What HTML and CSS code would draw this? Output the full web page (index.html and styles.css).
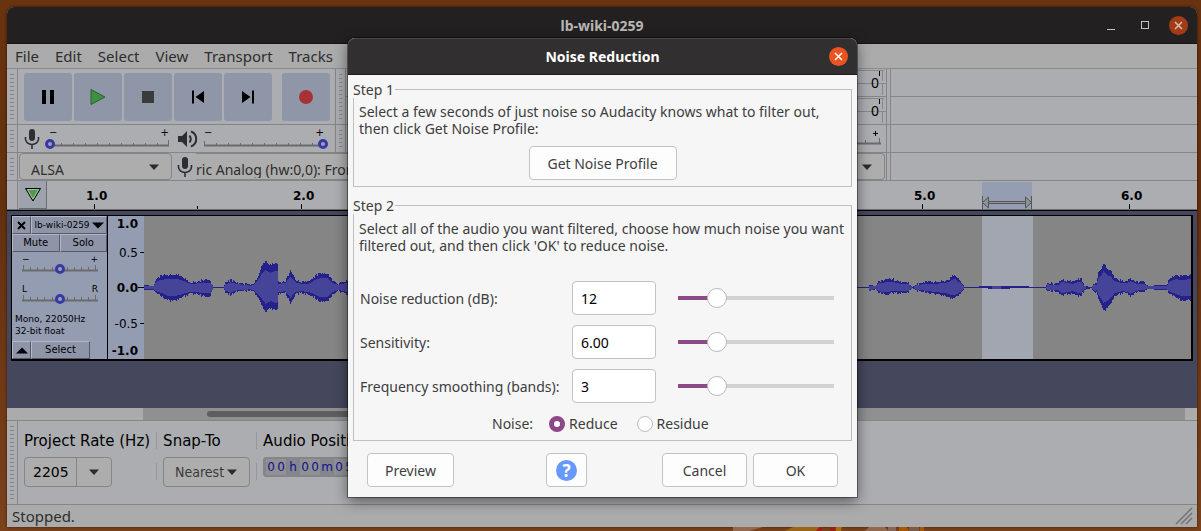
FILE: index.html
```html
<!DOCTYPE html>
<html lang="en">
<head>
<meta charset="utf-8">
<title>Noise Reduction</title>
<link rel="stylesheet" href="styles.css">
</head>
<body>
<svg class="defs" width="0" height="0" aria-hidden="true">
  <symbol id="mic" viewBox="0 0 16 20"><rect x="5" y="0" width="6" height="12" rx="3" fill="#2c2e2f"/><path d="M1.500 8v2a6.500 5.500 0 0 0 13 0V8M8 15v5" fill="none" stroke="#2c2e2f" stroke-width="1.600"/></symbol>
  <symbol id="ticks" viewBox="0 0 120 8"><path d="M0 6.500H120" stroke="#6b6b6b" stroke-width="2"/><path d="M.5 2v4M12.500 4v2M24.500 4v2M36.500 4v2M48.500 4v2M60.500 4v2M72.500 4v2M84.500 4v2M96.500 4v2M108.500 4v2M119.500 1v5" stroke="#6b6b6b"/></symbol>
  <symbol id="ticks-short" viewBox="0 0 76 8"><path d="M0 6.500H76" stroke="#6b6b6b" stroke-width="2"/><path d="M1.500 1v5M8.500 3v3M15.500 3v3M22.500 3v3M30.500 3v3M45.500 3v3M52.500 3v3M59.500 3v3M66.500 3v3M73.500 1v5" stroke="#6b6b6b"/></symbol>
  <symbol id="caret" viewBox="0 0 10 6"><path d="M0 .5h10L5 6z" fill="#2b2b2b"/></symbol>
</svg>

<main class="app">
  <header class="titlebar">
    <h1>lb-wiki-0259</h1>
    <div class="window-buttons">
      <button aria-label="Minimize"><svg width="10" height="10"><path d="M1 9.500h8" stroke="#c4c1be"/></svg></button>
      <button aria-label="Maximize"><svg width="10" height="10"><rect x="1.500" y="1.500" width="7" height="7" fill="none" stroke="#c4c1be"/></svg></button>
      <button class="close dim" aria-label="Close"><svg width="9" height="9"><path d="M1 1l7 7M8 1l-7 7" stroke="#d8c0b6" stroke-width="1.500"/></svg></button>
    </div>
  </header>
  <nav class="menu">
    <button>File</button><button>Edit</button><button>Select</button><button>View</button><button>Transport</button><button>Tracks</button>
  </nav>

  <section class="toolbars">
    <div class="tool-row tall">
      <div class="grip"></div>
      <div class="transport">
        <button aria-label="Pause"><svg width="14" height="16"><path d="M1 1h4v14H1zM9 1h4v14H9z"/></svg></button>
        <button aria-label="Play"><svg width="18" height="18"><path d="M2 1.500v15L16 9z" fill="#3f9141" stroke="#2b5f2e"/></svg></button>
        <button aria-label="Stop"><svg width="14" height="14"><path d="M1 1h12v12H1z" fill="#3a3c3b"/></svg></button>
        <button aria-label="Skip to start"><svg width="14" height="14"><path d="M1 .5h2v13H1zM13 1v12L4.500 7z"/></svg></button>
        <button aria-label="Skip to end"><svg width="14" height="14"><path d="M11 .5h2v13h-2zM1 1v12l8.500-6z"/></svg></button>
        <button class="record" aria-label="Record"><svg width="16" height="16"><circle cx="8" cy="8" r="7" fill="#a73233"/></svg></button>
      </div>
      <div class="grip second"></div>
      <div class="meters">
        <div class="meter"><svg width="30" height="27"><path d="M0 1.500h27M0 14.500h18M22 14.500h7M25.500 1v11M25.500 14v12" stroke="#878787" fill="none"/><path d="M22.500 2v5" stroke="#000"/><text x="14" y="19">0</text></svg></div>
        <div class="meter"><svg width="30" height="27"><path d="M0 1.500h27M0 14.500h18M22 14.500h7M25.500 1v11M25.500 14v12" stroke="#878787" fill="none"/><path d="M22.500 2v5" stroke="#000"/><text x="14" y="19">0</text></svg></div>
      </div>
      <div class="spare"><div></div><div></div></div>
    </div>
    <div class="tool-row">
      <div class="grip"></div>
      <div class="mixer">
        <svg width="16" height="20"><use href="#mic"/></svg>
        <div class="slider">
          <div class="ends"><span>−</span><span>+</span></div>
          <div class="rail"><svg width="120" height="8"><use href="#ticks"/></svg><input type="range" aria-label="Recording volume" min="0" max="100" value="0"></div>
        </div>
        <svg class="speaker" width="20" height="18"><path d="M0 6h4l5-5v16l-5-5H0z" fill="#2c2e2f"/><path d="M11.500 5.500q2.500 3.500 0 7M13 1.500a8 8 0 0 1 0 15" fill="none" stroke="#2c2e2f" stroke-width="2"/></svg>
        <div class="slider">
          <div class="ends"><span>−</span><span>+</span></div>
          <div class="rail"><svg width="120" height="8"><use href="#ticks"/></svg><input type="range" aria-label="Playback volume" min="0" max="100" value="100"></div>
        </div>
      </div>
      <div class="grip second"></div>
      <div class="meters"><div class="meter last"><svg width="34" height="26"><path d="M0 18.500h28" stroke="#6b6b6b" stroke-width="2"/><path d="M12.500 15v3M26.500 13v5" stroke="#6b6b6b"/><path d="M20 8.500h5M22.500 6v5" stroke="#000"/></svg></div></div>
      <div class="spare"></div>
    </div>
    <div class="tool-row">
      <div class="grip"></div>
      <div class="devices">
        <div class="select host"><select aria-label="Audio host"><option>ALSA</option></select><svg width="10" height="6"><use href="#caret"/></svg></div>
        <svg width="16" height="20"><use href="#mic"/></svg>
        <div class="select device"><select aria-label="Recording device"><option>ric Analog (hw:0,0): Front</option></select><svg width="10" height="6"><use href="#caret"/></svg></div>
      </div>
      <div class="spare"></div>
    </div>
  </section>

  <section class="timeline">
    <div class="timeline-grip"></div>
    <button class="pin" aria-label="Pinned play head"><svg width="18" height="16"><path d="M1.500 1.500h15L9 14z" fill="#4f9a50" stroke="#000"/><path d="M3.500 2.500h11L9 12z" fill="none" stroke="#a5bfa2"/></svg></button>
    <svg class="ruler" height="28">
      <rect x="935" y="1" width="50" height="27" fill="#949db1"/>
      <path d="M47.500 23v5M150.500 25v3M254.500 23v5M875.500 23v5M1082.500 23v5" stroke="#000"/>
      <path d="M941 20.500h38M941 22.500h38M935.500 15v13M984.500 15v13" stroke="#55575b"/>
      <path d="M941 21.500h38" stroke="#909090"/>
      <path d="M941.500 16v11L935.500 21.500zM978.500 16v11l6-5.500z" fill="#909090" stroke="#55575b"/>
      <g class="seconds"><text x="39" y="19">1.0</text><text x="246" y="19">2.0</text><text x="867" y="19">5.0</text><text x="1074" y="19">6.0</text></g>
    </svg>
  </section>

  <section class="tracks">
    <article class="track">
      <div class="panel">
        <div class="pair title"><button class="square" aria-label="Close track"><svg width="9" height="9"><path d="M1 1l7 7M8 1l-7 7" stroke="#000" stroke-width="2"/></svg></button><button class="name">lb-wiki-0259 <svg width="12" height="7"><path d="M0 .5h12L6 6.500z"/></svg></button></div>
        <div class="pair"><button>Mute</button><button>Solo</button></div>
        <div class="slider small">
          <div class="ends"><span>−</span><span>+</span></div>
          <div class="rail"><svg width="76" height="8"><use href="#ticks-short"/></svg><input type="range" aria-label="Gain" value="50"></div>
        </div>
        <div class="slider small pan">
          <div class="ends"><span>L</span><span>R</span></div>
          <div class="rail"><svg width="76" height="8"><use href="#ticks-short"/></svg><input type="range" aria-label="Pan" value="50"></div>
        </div>
        <p>Mono, 22050Hz<br>32-bit float</p>
        <div class="pair foot"><button class="square" aria-label="Collapse"><svg width="12" height="7"><path d="M0 6.500h12L6 .5z"/></svg></button><button class="pick">Select</button></div>
      </div>
      <svg class="scale" width="37" height="143">
        <path d="M32 36.500h4M30 71.500h6M32 107.500h4" stroke="#000"/>
        <g text-anchor="end"><text class="strong" x="30" y="12">1.0</text><text x="30" y="41">0.5</text><text class="strong" x="30" y="76">0.0</text><text x="30" y="112">-0.5</text><text class="strong" x="30" y="139">-1.0</text></g>
      </svg>
      <svg class="wave" viewBox="0 0 1047 143" preserveAspectRatio="none">
        <rect x="838" width="51" height="143" fill="#a2a6b0"/>
        <path id="peaks" fill="#24228a"/>
        <path id="rms" fill="#454499"/>
      </svg>
    </article>
  </section>
  <div class="scroll"><div class="scroll-rail"><div class="scroll-thumb"></div></div></div>

  <section class="selection">
    <div class="grip"></div>
    <div class="field"><label for="rate">Project Rate (Hz)</label>
      <div class="combo"><input id="rate" value="22050"><button aria-label="Choose rate"><svg width="10" height="6"><use href="#caret"/></svg></button></div></div>
    <div class="rule"></div>
    <div class="field"><label for="snap">Snap-To</label>
      <div class="select snap"><select id="snap"><option>Nearest</option></select><svg width="10" height="6"><use href="#caret"/></svg></div></div>
    <div class="rule"></div>
    <div class="field"><span>Audio Position</span>
      <div class="time"><b>0</b><b>0</b><i>h</i><b>0</b><b>0</b><i>m</i><b>0</b><b>5</b></div></div>
  </section>
  <footer class="status"><span>Stopped.</span><svg width="18" height="18"><path d="M1 17L17 1M6 17L17 6M11 17l6-6" stroke="#747474" stroke-width="1.500"/></svg></footer>
</main>

<svg class="wallpaper" width="330" height="4" aria-hidden="true"><path d="M133 4V0h30l-14 4z" fill="#92694f"/><path d="M185 4l8-4h28l-2 4z" fill="#9b6518"/><path d="M216 4l3-4h4l-1 4zM230 4V0h5v4z" fill="#a01f15"/><path d="M236 4V0h6l-1 4z" fill="#aa7010"/><path d="M265 4l4-4h16l3 4z" fill="#92694f"/><path d="M288 4V0h8v4z" fill="#866654"/><path d="M299 4V0h8l2 4zM320 4V0h4v4z" fill="#a55708"/><path d="M309 4V0h10v4z" fill="#7a5a48"/></svg>

<section class="dialog" role="dialog" aria-labelledby="dialog-title">
  <header><h2 id="dialog-title">Noise Reduction</h2><button class="close" aria-label="Close dialog"><svg width="9" height="9"><path d="M1 1l7 7M8 1l-7 7" stroke="#fff" stroke-width="1.500"/></svg></button></header>
  <form class="body">
    <fieldset class="step-one">
      <legend>Step 1</legend>
      <p>Select a few seconds of just noise so Audacity knows what to filter out,<br>then click Get Noise Profile:</p>
      <button type="button" class="btn profile">Get Noise Profile</button>
    </fieldset>
    <fieldset class="step-two">
      <legend>Step 2</legend>
      <p>Select all of the audio you want filtered, choose how much noise you want<br>filtered out, and then click 'OK' to reduce noise.</p>
      <div class="settings">
        <label for="db">Noise reduction (dB):</label><input class="text" id="db" value="12"><input type="range" aria-label="Noise reduction" max="48" value="12">
        <label for="sens">Sensitivity:</label><input class="text" id="sens" value="6.00"><input type="range" aria-label="Sensitivity" max="24" value="6">
        <label for="bands">Frequency smoothing (bands):</label><input class="text" id="bands" value="3"><input type="range" aria-label="Frequency smoothing" max="12" value="3">
      </div>
      <div class="radios"><span>Noise:</span><label><input type="radio" name="noise" checked>Reduce</label><label><input type="radio" name="noise">Residue</label></div>
    </fieldset>
    <div class="actions">
      <button type="button" class="btn preview">Preview</button>
      <button type="button" class="btn help" aria-label="Help"><span>?</span></button>
      <button type="button" class="btn choice">Cancel</button>
      <button type="button" class="btn choice">OK</button>
    </div>
  </form>
</section>
<script src="wave.js"></script>
</body>
</html>
```
FILE: wave.js
```js
// Envelope points: x, height above the centre line, depth below it.
const envelope = [
  [0,2,2],[9,1,2],[12,8,5],[16,11,7],[23,12,12],[28,12,13],[34,12,11],[41,8,8],[46,5,6],[51,5,6],[59,7,8],[66,6,8],[69,0,0],[79,0,0],
  [81,4,4],[86,7,7],[91,5,4],[106,2,2],[110,4,4],[113,9,9],[117,20,16],[121,26,24],[126,22,20],[131,25,23],[133,24,22],[134,5,6],[141,6,5],
  [146,16,15],[151,7,6],[157,5,5],[164,5,6],[171,11,10],[176,14,14],[184,13,13],[188,6,6],[194,3,3],[197,5,4],[204,6,7],[215,0,0],
  [724,0,0],[725,2,4],[731,1,1],[734,6,5],[741,7,6],[748,8,5],[756,5,5],[764,4,4],[768,0,0],[773,3,3],[781,5,4],[791,5,6],[801,6,8],
  [806,9,10],[810,13,11],[816,6,6],[820,0,0],[831,0,0],[838,1,0],[850,1,1],[880,1,0],[889,0,0],[901,0,0],[903,4,3],[914,3,3],[917,8,8],
  [923,6,6],[929,5,5],[934,8,8],[937,8,7],[940,1,2],[947,0,0],[950,4,5],[952,3,3],[954,14,10],[957,18,17],[959,24,23],[963,18,20],
  [966,17,16],[970,9,8],[978,6,5],[984,7,6],[986,9,9],[992,5,4],[999,5,3],[1004,1,1],[1016,2,2],[1022,2,2],[1026,9,6],[1031,12,9],[1036,11,12],[1048,12,12]
];
const middle = 71;
function level(x, side) {
  const next = Math.max(1, envelope.findIndex(point => point[0] > x));
  const a = envelope[next - 1], b = envelope[next];
  return a[side] + (b[side] - a[side]) * (x - a[0]) / (b[0] - a[0]);
}
function bars(ratio, rough) {
  let path = '';
  for (let x = 0; x < 1047; x++) {
    const jitter = rough ? ((x * 37 + (x * x * 11) % 17) % 5) / 2 - 1 : 0;
    const size = side => {
      const value = level(x, side);
      return Math.round(value * ratio + (value > 2 ? jitter : 0));
    };
    const up = size(1), down = size(2);
    if (rough || up + down > 1) path += `M${x} ${middle - up}h1v${up + down + 1}h-1z`;
  }
  return path;
}
document.getElementById('peaks').setAttribute('d', bars(1, true));
document.getElementById('rms').setAttribute('d', bars(0.65, false));
```
FILE: styles.css
```css
* { box-sizing: border-box; }
body { margin: 0; min-height: 100vh; padding: 7px 4px 4px 7px; background: linear-gradient(#6a330f, #63300f 40%, #7b421b); font: 14px/17px "Noto Sans", sans-serif; color: #2d2d2d; position: relative; }
button, input, select { font: inherit; color: inherit; margin: 0; }
button { padding: 0; border: 0; background: none; display: flex; align-items: center; justify-content: center; }
svg { display: block; flex: none; }
h1, h2, p { margin: 0; font-size: inherit; }
.defs { position: absolute; }

.app { background: #abadb1; border-radius: 7px 7px 0 0; overflow: hidden; box-shadow: 0 0 3px rgba(0, 0, 0, .6); }
.titlebar { height: 37px; display: grid; grid-template-columns: 1fr auto 1fr; align-items: center; background: #232021; border-bottom: 1px solid #151313; }
.titlebar h1 { grid-column: 2; color: #b9b7b3; }
.window-buttons { display: flex; justify-content: flex-end; gap: 15px; padding-right: 9px; align-items: center; }
.window-buttons button { width: 19px; height: 19px; }
.close { width: 19px; height: 19px; border-radius: 50%; background: #e95420; }
.close.dim { background: #a43b17; }
.menu { height: 25px; display: flex; align-items: center; gap: 16px; padding-left: 8px; background: #ababab; border-bottom: 1px solid #8b8b8b; font-size: 15px; }

.tool-row { height: 28px; display: flex; border-bottom: 1px solid #858585; }
.tool-row.tall { height: 56px; }
.grip { width: 11px; flex: none; border-right: 1px solid #858585; padding: 5px 3px; background: repeating-linear-gradient(#858585 0 1px, transparent 1px 4px) content-box; }
.grip.second { border-left: 1px solid #858585; }
.transport { display: flex; gap: 2px; padding: 4px 5px 3px 6px; width: 317px; }
.transport button { flex: 1; border-radius: 3px; background: #8f96a8; }
.transport .record { margin-left: 8px; }
.meters { width: 545px; }
.meter { height: 28px; display: flex; justify-content: flex-end; border-bottom: 1px solid #858585; }
.meter.last { border: 0; }
.meter text { font-size: 14px; }
.meters, .devices { border-right: 1px solid #858585; padding-right: 3px; background: linear-gradient(#858585, #858585) right 3px top / 1px 100% no-repeat; }
.spare { flex: 1; }
.spare div { height: 28px; border-bottom: 1px solid #858585; }
.mixer { display: flex; align-items: center; padding-left: 6px; gap: 5px; width: 317px; }
.speaker { margin-right: -2px; }
.slider { width: 128px; font: 10px/8px "DejaVu Sans", sans-serif; color: #000; }
.mixer .slider:last-child { margin-left: -1px; }
.ends { display: flex; justify-content: space-between; padding: 0 4px; }
.rail { display: grid; align-items: center; justify-items: center; }
.rail > * { grid-area: 1 / 1; }
.rail input { width: 100%; height: 12px; }
input[type=range] { appearance: none; background: none; }
.rail input::-webkit-slider-thumb { appearance: none; width: 10px; height: 10px; border-radius: 50%; border: 3px solid #373aa6; background: #a0a0a8; margin-top: 2px; }
.devices { display: flex; align-items: center; width: 873px; padding-left: 1px; }
.select { display: grid; align-items: center; border: 1px solid #858585; border-radius: 4px; background: #adadad; }
.select > * { grid-area: 1 / 1; }
.select select { appearance: none; border: 0; background: none; width: 100%; height: 100%; padding: 0; }
.select svg { justify-self: end; margin-right: 12px; pointer-events: none; }
.host { width: 153px; height: 27px; margin-right: 5px; }
.devices .select select { padding-top: 5px; }
.devices .host select { padding-left: 11px; }
.device { flex: 1; height: 27px; border-left: 0; border-radius: 0 4px 4px 0; margin-left: 3px; margin-right: 2px; }

.timeline { display: flex; height: 29px; border-bottom: 1px solid #6c6d70; }
.timeline-grip { width: 11px; border-right: 1px solid #858585; }
.pin { width: 28px; margin-left: 1px; background: #9da2ad; border: solid #6a6d74; border-width: 0 1px 1px 0; }
.ruler { flex: 1; min-width: 0; overflow: hidden; }
.seconds { font: bold 12px "DejaVu Sans", sans-serif; }

.tracks { background: #45475c; border-top: 1px solid #000; padding: 4px 4px 47px; }
.track { display: flex; border: 1px solid #000; border-right-width: 2px; border-bottom-width: 2px; font-family: "DejaVu Sans", sans-serif; color: #000; }
.panel { width: 95px; background: #949cb2; font-size: 10px; line-height: 12px; display: flex; flex-direction: column; }
.pair { display: flex; height: 18px; }
.pair button { flex: 1; background: #8f95a8; border: solid; border-width: 1px; border-color: #b3b8c5 #555a66 #555a66 #b3b8c5; }
.pair .square { flex: none; width: 19px; }
.pair .name { gap: 2px; white-space: nowrap; font-size: 9px; }
.pair .pick { flex: none; width: 59px; }
.pair.foot { margin-top: auto; }
.slider.small { width: 80px; margin: 1px 0 0 8px; font-size: 9px; line-height: 12px; }
.slider.small.pan { margin-top: 11px; }
.slider.small .ends { padding: 0 2px; height: 9px; }
.slider.small .rail { height: 10px; }
.panel p { font-size: 9px; padding: 11px 3px 0; }
.scale { background: #949cb2; border-left: 1px solid #000; font-size: 12px; }
.strong { font-weight: bold; }
.wave { flex: 1; min-width: 0; height: 143px; background: #858585; shape-rendering: crispEdges; }
.scroll { height: 12px; padding: 0 12px 0 136px; background: #ababab; }
.scroll-rail { height: 100%; background: #909090; padding: 3px 40% 3px 64px; }
.scroll-thumb { height: 6px; border-radius: 3px; background: #5e5e5e; }

.selection { height: 85px; display: flex; border: solid #858585; border-width: 1px 0; font-family: "DejaVu Sans", sans-serif; color: #000; }
.selection .grip { margin-right: 6px; }
.field { padding-top: 12px; white-space: nowrap; font-size: 14px; }
.field > label, .field > span { display: block; height: 24px; font-size: 15px; }
.combo { display: flex; width: 88px; height: 30px; border: 1px solid #858585; border-radius: 4px; background: #adadad; }
.combo input { width: 52px; min-width: 0; border: 0; border-right: 1px solid #858585; padding: 0 7px 0 8px; background: none; }
.combo button { flex: 1; }
.snap { width: 87px; height: 30px; font: 14px "DejaVu Sans Condensed", "DejaVu Sans", sans-serif; color: #3a3a3a; }
.snap select { padding-left: 11px; }
.rule { width: 1px; margin: 11px 6px 24px; background: linear-gradient(#979797 0 17px, transparent 17px 31px, #979797 31px); }
.time { display: flex; height: 20px; width: 160px; padding: 1px 2px; border: 1px solid #858585; border-radius: 3px; background: #83868c; color: #10108f; font-size: 12px; }
.time b, .time i { width: 10px; font-weight: normal; font-style: normal; background: #919193; text-align: center; }
.time i { width: 14px; background: none; }
.status { height: 22px; display: flex; align-items: center; justify-content: space-between; padding: 0 4px 0 5px; background: #ababab; font-size: 15px; }
.wallpaper { position: absolute; left: 600px; bottom: 0; }

.dialog { position: absolute; left: 348px; top: 38px; width: 509px; background: #f6f6f6; border-radius: 7px 7px 0 0; box-shadow: 0 0 0 1px rgba(0, 0, 0, .4), 0 4px 14px rgba(0, 0, 0, .5); color: #3d3d3d; }
.dialog header { height: 37px; display: grid; grid-template-columns: 1fr auto 1fr; align-items: center; background: #322f30; border-top: 1px solid #4a4747; border-bottom: 1px solid #1d1b1b; border-radius: 7px 7px 0 0; color: #fff; }
.dialog h2 { grid-column: 2; }
.dialog .close { justify-self: end; margin-right: 9px; }
.body { padding: 6px 5px 10px; }
fieldset { margin: 0; min-width: 0; border: 1px solid #c0c0c0; padding: 5px 5px 6px; }
legend { padding: 0 1px 0 0; margin-left: -6px; height: 17px; }
.step-one { margin-bottom: 10px; }
.step-two { margin-bottom: 12px; padding-top: 6px; }
p { white-space: nowrap; }
.btn { height: 34px; border: 1px solid #c3c3c3; border-radius: 4px; background: #fdfdfd; }
.profile { width: 148px; margin: 9px auto 0; }
.settings { display: grid; grid-template-columns: 205px 84px 176px; column-gap: 7px; row-gap: 10px; align-items: center; padding: 27px 0 0 1px; }
.settings .text { width: 84px; height: 34px; border: 1px solid #c3c3c3; border-radius: 4px; background: #fff; color: #000; padding: 0 8px; }
.settings input[type=range] { width: 176px; height: 24px; margin-left: 5px; }
.settings input::-webkit-slider-runnable-track { height: 20px; background: linear-gradient(90deg, #8a4a85 25%, #d2d2d2 25%) 10px 8px / 156px 4px no-repeat; }
.settings input::-webkit-slider-thumb { appearance: none; width: 20px; height: 20px; border-radius: 50%; border: 1px solid #b9b9b9; background: #fff; }
.radios { display: flex; align-items: center; gap: 16px; height: 17px; margin: 12px 0 2px 133px; }
.radios label { display: flex; align-items: center; gap: 4px; }
.radios label + label { margin-left: 3px; }
.radios input { appearance: none; width: 16px; height: 16px; border: 1px solid #bcbcbc; border-radius: 50%; background: #fff; }
.radios input:checked { border: 5px solid #8d4888; }
.actions { display: flex; padding: 0 14px; gap: 6px; }
.preview { width: 87px; }
.help { width: 41px; margin: 0 69px 0 auto; }
.help span { width: 21px; height: 21px; border-radius: 50%; background: #6798fb; color: #fff; font-weight: bold; font-size: 17px; line-height: 21px; }
.choice { width: 85px; }
```
